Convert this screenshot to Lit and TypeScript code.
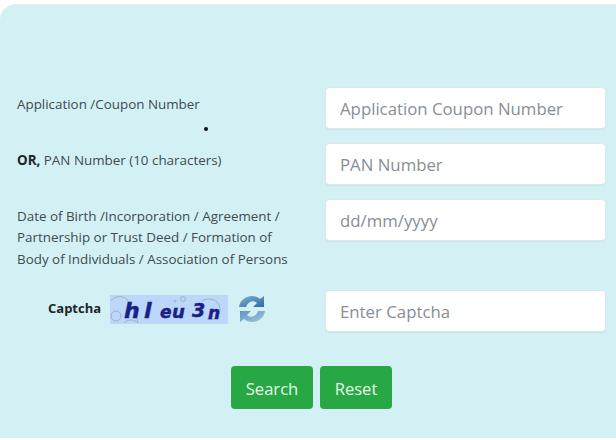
import { LitElement, html, css } from "lit";
import { customElement } from "lit/decorators.js";

@customElement("app-root")
export class AppRoot extends LitElement {
  static styles = css`
    :host { display: block; width: 616px; height: 440px; background: #fff; overflow: hidden; font-family: "Open Sans", "Noto Sans", sans-serif; }
    .card { position: relative; box-sizing: border-box; height: 434px; margin-top: 4px; background: #d3f1f4; border-top: 1px solid #e4eeee; border-radius: 16px 0 0 0; padding: 82px 10px 0 17px; display: flex; flex-direction: column; }
    .row { display: flex; align-items: flex-start; margin-bottom: 14px; }
    .lab { width: 308px; flex: none; font-size: 13.4px; line-height: 21.4px; color: #3f4a52; padding-top: 7px; box-sizing: border-box; }
    .lab b { color: #212529; }
    .in { box-sizing: border-box; width: 281px; height: 42px; flex: none; background: #fff; border: 1px solid #dee6e8; border-radius: 4px; font-size: 16.8px; color: #868e96; display: flex; align-items: center; padding: 0 0 0 14px; box-shadow: 0 1px 1px rgba(0,0,0,.06); }
    .row3 { margin-bottom: 21px; }
    .row3 .lab { height: 70px; }
    .cap { display: flex; align-items: center; height: 38px; padding-left: 31px; box-sizing: border-box; }
    .capt { font-size: 13px; font-weight: 700; color: #212529; width: 62px; margin-top: 0; }
    .capimg { display: block; width: 118px; height: 29px; }
    .refresh { display: block; width: 28px; height: 30px; margin-left: 10px; }
    .btns { display: flex; justify-content: center; gap: 7px; margin-top: 34px; }
    .btn { box-sizing: border-box; height: 43px; padding-top: 1px; display: flex; align-items: center; justify-content: center; background: #28a745; color: #e6f7e9; font-size: 16.6px; border-radius: 4px; }
    .s { width: 82px; }
    .r { width: 72px; }
    .dot { position: absolute; left: 204px; top: 122px; width: 4px; height: 4px; border-radius: 50%; background: #111; }
    text { font-family: "DejaVu Sans", sans-serif; font-weight: 700; font-style: italic; fill: #1b1f8a; stroke: #1b1f8a; stroke-width: 0.5; }
  `;

  render() {
    return html`<div class="card">
      <div class="dot"></div>
      <div class="row"><div class="lab">Application /Coupon Number</div><div class="in">Application Coupon Number</div></div>
      <div class="row"><div class="lab"><b>OR,</b> PAN Number (10 characters)</div><div class="in">PAN Number</div></div>
      <div class="row row3"><div class="lab">Date of Birth /Incorporation / Agreement /<br>Partnership or Trust Deed / Formation of<br>Body of Individuals / Association of Persons</div><div class="in">dd/mm/yyyy</div></div>
      <div class="row" style="margin-bottom:0"><div class="lab" style="padding-top:0"><div class="cap">
        <span class="capt">Captcha</span>
        <svg class="capimg" viewBox="0 0 118 29">
          <rect width="118" height="29" fill="#bcd7f9"/>
          <g fill="none" stroke="#97a6b6" stroke-width="0.8">
            <path d="M1 6C5 0 14 0 18 6 21 11 26 18 28 28"/><circle cx="6" cy="21" r="5"/><circle cx="73" cy="4" r="2.500"/><circle cx="65" cy="6" r="1"/><path d="M92 6c8-5 19 0 18 10-1 6-6 10-13 8"/><path d="M14 28c4-4 10-4 14 0"/>
          </g>
          <text x="14" y="23" font-size="22">h</text>
          <text x="34" y="23" font-size="22">l</text>
          <text x="50" y="23" font-size="17">e</text>
          <text x="62" y="23" font-size="18">u</text>
          <text x="82" y="22" font-size="19">3</text>
          <text x="98" y="24" font-size="17">n</text>
        </svg>
        <svg class="refresh" viewBox="0 0 28 30">
          <defs>
            <linearGradient id="a" x1="0" y1="0" x2="1" y2="1"><stop offset="0" stop-color="#7fb0d4"/><stop offset="1" stop-color="#2f6c9e"/></linearGradient>
            <linearGradient id="b" x1="0" y1="0" x2="1" y2="1"><stop offset="0" stop-color="#5f96bf"/><stop offset="1" stop-color="#a4c6dc"/></linearGradient>
          </defs>
          <path d="M1 13C2 6 8 2 14 2c3 0 6 1 8 3l4-3v11H15l4-4c-3-3-9-2-11 4z" fill="url(#a)"/>
          <path d="M27 17c-1 7-7 11-13 11-3 0-6-1-8-3l-4 3V17h11l-4 4c3 3 9 2 11-4z" fill="url(#b)"/>
        </svg>
      </div></div><div class="in">Enter Captcha</div></div>
      <div class="btns"><div class="btn s">Search</div><div class="btn r">Reset</div></div>
    </div>`;
  }
}
